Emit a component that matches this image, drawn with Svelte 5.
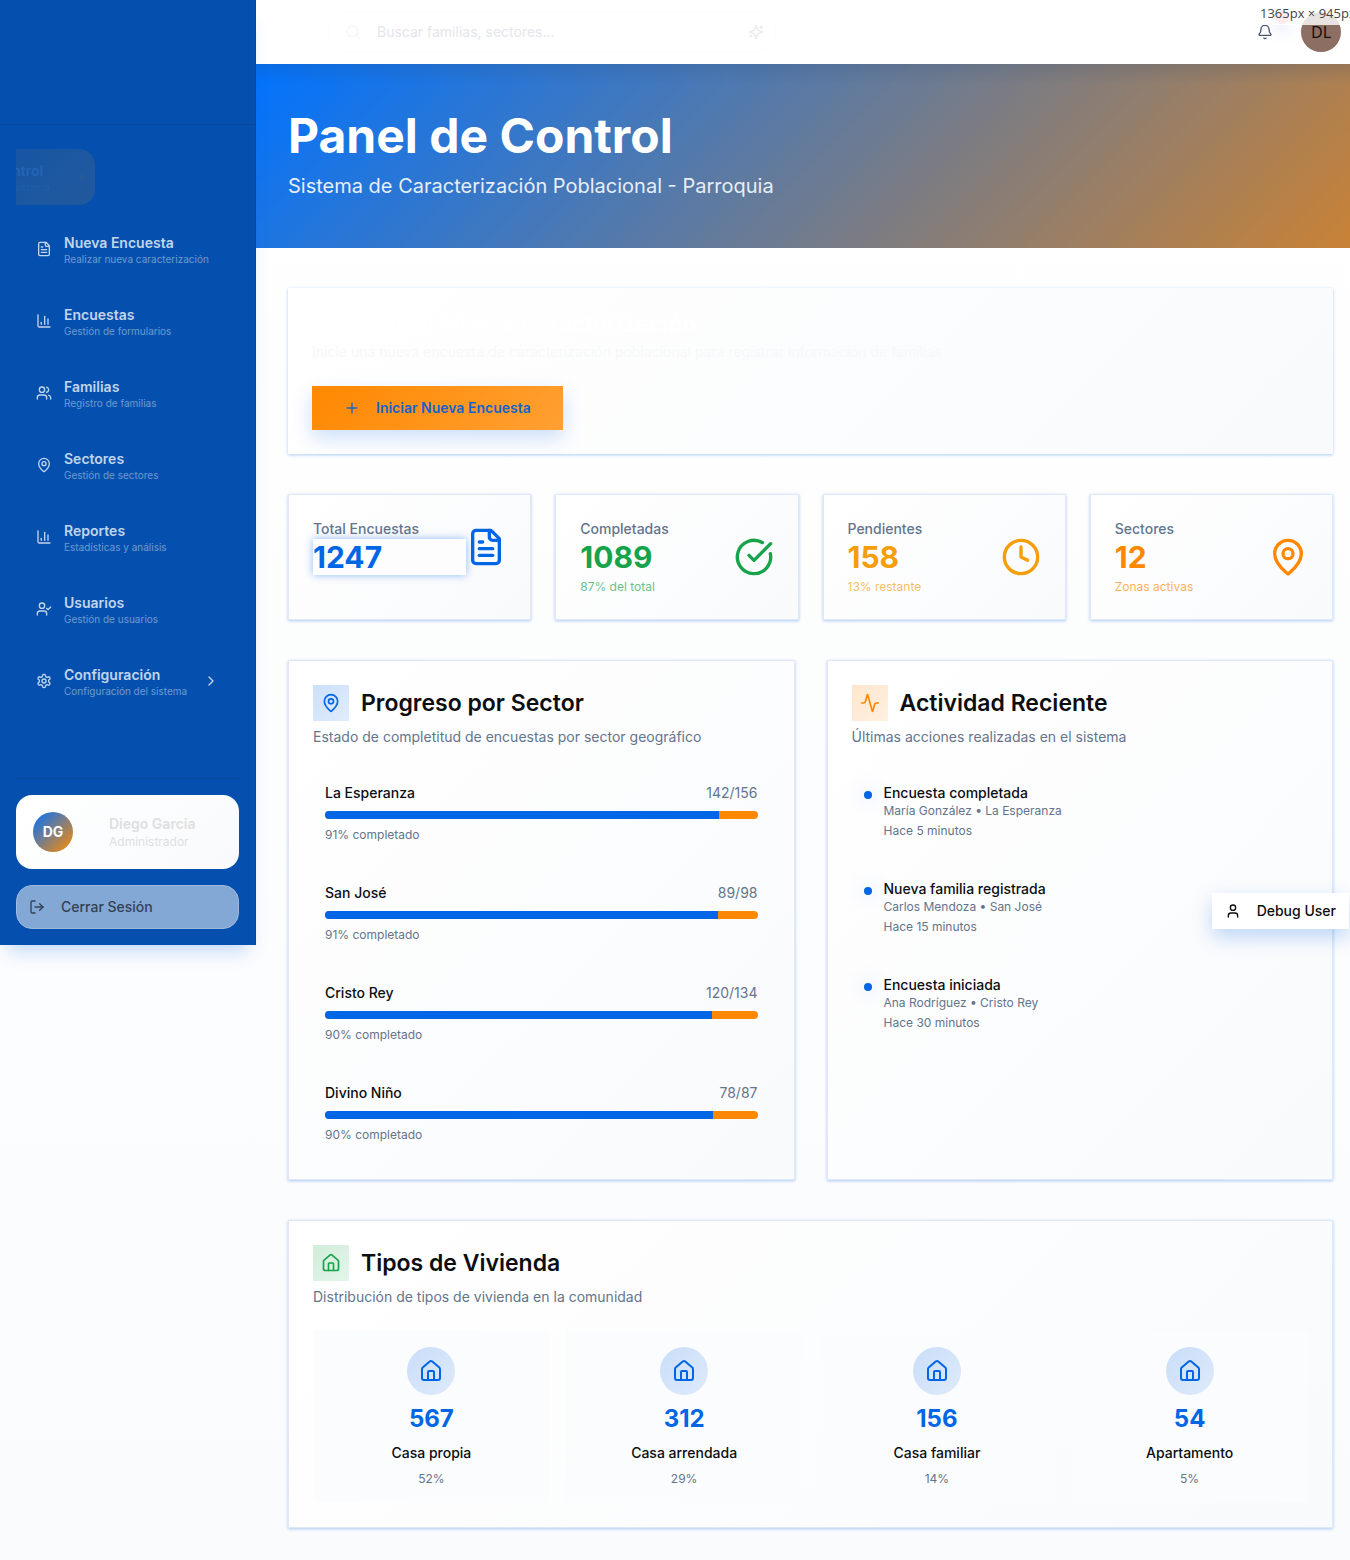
<script>
  const navItems = [
    { title: 'Nueva Encuesta', sub: 'Realizar nueva caracterización', icon: 'file' },
    { title: 'Encuestas', sub: 'Gestión de formularios', icon: 'chart' },
    { title: 'Familias', sub: 'Registro de familias', icon: 'users' },
    { title: 'Sectores', sub: 'Gestión de sectores', icon: 'pin' },
    { title: 'Reportes', sub: 'Estadísticas y análisis', icon: 'chart' },
    { title: 'Usuarios', sub: 'Gestión de usuarios', icon: 'usercheck' },
    { title: 'Configuración', sub: 'Configuración del sistema', icon: 'gear', more: true }
  ];
  const stats = [
    { label: 'Total Encuestas', value: '1247', sub: '', icon: 'file', tone: 'blue' },
    { label: 'Completadas', value: '1089', sub: '87% del total', icon: 'check', tone: 'green' },
    { label: 'Pendientes', value: '158', sub: '13% restante', icon: 'clock', tone: 'amber' },
    { label: 'Sectores', value: '12', sub: 'Zonas activas', icon: 'pin', tone: 'orange' }
  ];
  const sectors = [
    { name: 'La Esperanza', done: 142, total: 156 },
    { name: 'San José', done: 89, total: 98 },
    { name: 'Cristo Rey', done: 120, total: 134 },
    { name: 'Divino Niño', done: 78, total: 87 }
  ];
  const activity = [
    { title: 'Encuesta completada', who: 'María González • La Esperanza', time: 'Hace 5 minutos' },
    { title: 'Nueva familia registrada', who: 'Carlos Mendoza • San José', time: 'Hace 15 minutos' },
    { title: 'Encuesta iniciada', who: 'Ana Rodríguez • Cristo Rey', time: 'Hace 30 minutos' }
  ];
  const housing = [
    { count: 567, name: 'Casa propia', pct: '52%' },
    { count: 312, name: 'Casa arrendada', pct: '29%' },
    { count: 156, name: 'Casa familiar', pct: '14%' },
    { count: 54, name: 'Apartamento', pct: '5%' }
  ];
  const icons = {
    file: ['M15 2H6a2 2 0 0 0-2 2v16a2 2 0 0 0 2 2h12a2 2 0 0 0 2-2V7Z', 'M14 2v4a2 2 0 0 0 2 2h4', 'M10 9H8', 'M16 13H8', 'M16 17H8'],
    chart: ['M3 3v16a2 2 0 0 0 2 2h16', 'M18 17V9', 'M13 17V5', 'M8 17v-3'],
    users: ['M16 21v-2a4 4 0 0 0-4-4H6a4 4 0 0 0-4 4v2', 'M5 7a4 4 0 1 0 8 0a4 4 0 1 0-8 0', 'M22 21v-2a4 4 0 0 0-3-3.87', 'M16 3.13a4 4 0 0 1 0 7.75'],
    usercheck: ['m16 11 2 2 4-4', 'M16 21v-2a4 4 0 0 0-4-4H6a4 4 0 0 0-4 4v2', 'M5 7a4 4 0 1 0 8 0a4 4 0 1 0-8 0'],
    user: ['M19 21v-2a4 4 0 0 0-4-4H9a4 4 0 0 0-4 4v2', 'M8 7a4 4 0 1 0 8 0a4 4 0 1 0-8 0'],
    pin: ['M20 10c0 4.993-5.539 10.193-7.399 11.799a1 1 0 0 1-1.202 0C9.539 20.193 4 14.993 4 10a8 8 0 0 1 16 0', 'M9 10a3 3 0 1 0 6 0a3 3 0 1 0-6 0'],
    gear: ['M12.22 2h-.44a2 2 0 0 0-2 2v.18a2 2 0 0 1-1 1.73l-.43.25a2 2 0 0 1-2 0l-.15-.08a2 2 0 0 0-2.73.73l-.22.38a2 2 0 0 0 .73 2.73l.15.1a2 2 0 0 1 1 1.72v.51a2 2 0 0 1-1 1.74l-.15.09a2 2 0 0 0-.73 2.73l.22.38a2 2 0 0 0 2.73.73l.15-.08a2 2 0 0 1 2 0l.43.25a2 2 0 0 1 1 1.73V20a2 2 0 0 0 2 2h.44a2 2 0 0 0 2-2v-.18a2 2 0 0 1 1-1.73l.43-.25a2 2 0 0 1 2 0l.15.08a2 2 0 0 0 2.73-.73l.22-.39a2 2 0 0 0-.73-2.73l-.15-.08a2 2 0 0 1-1-1.74v-.5a2 2 0 0 1 1-1.74l.15-.09a2 2 0 0 0 .73-2.73l-.22-.38a2 2 0 0 0-2.73-.73l-.15.08a2 2 0 0 1-2 0l-.43-.25a2 2 0 0 1-1-1.73V4a2 2 0 0 0-2-2z', 'M9 12a3 3 0 1 0 6 0a3 3 0 1 0-6 0'],
    chevron: ['m9 18 6-6-6-6'],
    logout: ['m16 17 5-5-5-5', 'M21 12H9', 'M9 21H5a2 2 0 0 1-2-2V5a2 2 0 0 1 2-2h4'],
    search: ['M3 11a8 8 0 1 0 16 0a8 8 0 1 0-16 0', 'm21 21-4.3-4.3'],
    sparkles: ['M9.937 15.5A2 2 0 0 0 8.5 14.063l-6.135-1.582a.5.5 0 0 1 0-.962L8.5 9.936A2 2 0 0 0 9.937 8.5l1.582-6.135a.5.5 0 0 1 .963 0L14.063 8.5A2 2 0 0 0 15.5 9.937l6.135 1.581a.5.5 0 0 1 0 .964L15.5 14.063a2 2 0 0 0-1.437 1.437l-1.582 6.135a.5.5 0 0 1-.963 0z', 'M20 3v4', 'M22 5h-4', 'M4 17v2', 'M5 18H3'],
    bell: ['M10.268 21a2 2 0 0 0 3.464 0', 'M3.262 15.326A1 1 0 0 0 4 17h16a1 1 0 0 0 .74-1.673C19.41 13.956 18 12.499 18 8A6 6 0 0 0 6 8c0 4.499-1.411 5.956-2.738 7.326'],
    plus: ['M5 12h14', 'M12 5v14'],
    check: ['M21.801 10A10 10 0 1 1 17 3.335', 'm9 11 3 3L22 4'],
    clock: ['M2 12a10 10 0 1 0 20 0a10 10 0 1 0-20 0', 'M12 6v6l4 2'],
    activity: ['M22 12h-2.48a2 2 0 0 0-1.93 1.46l-2.35 8.36a.25.25 0 0 1-.48 0L9.24 2.18a.25.25 0 0 0-.48 0l-2.35 8.36A2 2 0 0 1 4.49 12H2'],
    house: ['M15 21v-8a1 1 0 0 0-1-1h-4a1 1 0 0 0-1 1v8', 'M3 10a2 2 0 0 1 .709-1.528l7-5.999a2 2 0 0 1 2.582 0l7 5.999A2 2 0 0 1 21 10v9a2 2 0 0 1-2 2H5a2 2 0 0 1-2-2z']
  };
</script>

{#snippet icon(name, size)}
  <svg class="icon" width={size} height={size} viewBox="0 0 24 24" aria-hidden="true">
    {#each icons[name] as d}<path {d} />{/each}
  </svg>
{/snippet}

{#snippet panelHead(name, tone, title, sub)}
  <header class="panel-head">
    <div class="panel-title">
      <span class="chip {tone}">{@render icon(name, 20)}</span>
      <h2>{title}</h2>
    </div>
    <p>{sub}</p>
  </header>
{/snippet}

<div class="app">
  <aside class="sidebar">
    <div class="brand"></div>
    <nav>
      <div class="slide">
        <a href="#panel" class="entering">
          <span class="nav-text"><b>Panel de Control</b><small>Vista general del sistema</small></span>
          <i></i>
        </a>
      </div>
      {#each navItems as item}
        <a href="#seccion" class="nav-item">
          {@render icon(item.icon, 16)}
          <span class="nav-text"><b>{item.title}</b><small>{item.sub}</small></span>
          {#if item.more}{@render icon('chevron', 16)}{/if}
        </a>
      {/each}
    </nav>
    <div class="account">
      <div class="user-card">
        <span class="initials">DG</span>
        <span class="user-text"><b>Diego Garcia</b><small>Administrador</small></span>
      </div>
      <button class="logout">{@render icon('logout', 16)}Cerrar Sesión</button>
    </div>
  </aside>

  <div class="page">
    <header class="topbar">
      <label class="search">
        {@render icon('search', 16)}
        <input type="search" placeholder="Buscar familias, sectores..." aria-label="Buscar" />
        {@render icon('sparkles', 16)}
      </label>
      <div class="tools">
        <button class="bell" aria-label="Notificaciones">{@render icon('bell', 16)}<i></i></button>
        <button class="avatar">DL</button>
      </div>
    </header>

    <section class="banner">
      <h1>Panel de Control</h1>
      <p>Sistema de Caracterización Poblacional - Parroquia</p>
    </section>

    <main>
      <section class="cta">
        <h2>{@render icon('file', 24)}Realizar Nueva Caracterización</h2>
        <p>Inicie una nueva encuesta de caracterización poblacional para registrar información de familias</p>
        <button>{@render icon('plus', 16)}Iniciar Nueva Encuesta</button>
      </section>

      <section class="stats">
        {#each stats as s, i}
          <article class="card stat {s.tone}">
            <div class="stat-row">
              <div class="stat-text">
                <span class="label">{s.label}</span>
                <strong class:glow={i === 0}>{s.value}</strong>
                {#if s.sub}<small>{s.sub}</small>{/if}
              </div>
              {@render icon(s.icon, 40)}
            </div>
          </article>
        {/each}
      </section>

      <section class="panels">
        <article class="card">
          {@render panelHead('pin', 'blue', 'Progreso por Sector', 'Estado de completitud de encuestas por sector geográfico')}
          <div class="list">
            {#each sectors as s}
              <div class="sector">
                <div class="sector-top"><span>{s.name}</span><em>{s.done}/{s.total}</em></div>
                <div class="bar"><div style:width="{(s.done / s.total) * 100}%"></div></div>
                <small>{Math.round((s.done / s.total) * 100)}% completado</small>
              </div>
            {/each}
          </div>
        </article>
        <article class="card">
          {@render panelHead('activity', 'orange', 'Actividad Reciente', 'Últimas acciones realizadas en el sistema')}
          <div class="list">
            {#each activity as a}
              <div class="event">
                <i></i>
                <div><span>{a.title}</span><small>{a.who}</small><small class="time">{a.time}</small></div>
              </div>
            {/each}
          </div>
        </article>
      </section>

      <section class="card">
        {@render panelHead('house', 'green', 'Tipos de Vivienda', 'Distribución de tipos de vivienda en la comunidad')}
        <div class="housing">
          {#each housing as h}
            <div class="home">
              <span class="round">{@render icon('house', 24)}</span>
              <strong>{h.count}</strong>
              <span>{h.name}</span>
              <small>{h.pct}</small>
            </div>
          {/each}
        </div>
      </section>
    </main>
  </div>

  <div class="viewport-size">1365px × 945px</div>
  <button class="debug">{@render icon('user', 16)}Debug User</button>
</div>

<style>
  :global(body) {
    margin: 0;
    font-family: Inter, 'Liberation Sans', sans-serif;
    color: #0c0e12;
  }
  .app, .app * { box-sizing: border-box; }
  .app {
    position: relative;
    display: grid;
    grid-template-columns: 256px minmax(0, 1fr);
    align-items: start;
    overflow: hidden;
    background: linear-gradient(180deg, #ffffff, #fafbfd);
    font-size: 14px;
    line-height: 20px;
  }
  h1, h2, p { margin: 0; }
  small { font-size: 12px; line-height: 16px; }
  button { font: inherit; border: 0; cursor: pointer; }
  a { color: inherit; text-decoration: none; }
  .icon {
    flex: none;
    fill: none;
    stroke: currentColor;
    stroke-width: 2;
    stroke-linecap: round;
    stroke-linejoin: round;
  }

  .sidebar {
    background: #0550ae;
    border-right: 1px solid #05479c;
    box-shadow: 0 14px 18px -8px rgba(0, 102, 230, 0.24);
    z-index: 2;
  }
  .brand { height: 125px; border-bottom: 1px solid #07489b; }
  nav { display: flex; flex-direction: column; gap: 16px; padding: 24px 16px 69px; }
  .slide { height: 56px; overflow: hidden; }
  .entering {
    display: flex;
    align-items: center;
    justify-content: flex-end;
    gap: 29px;
    width: 223px;
    height: 56px;
    margin-left: -144px;
    padding-right: 10px;
    border-radius: 16px;
    background: linear-gradient(135deg, #0b52ab, #22599d);
    color: #2265b6;
  }
  .entering .nav-text { flex: none; }
  .entering i { width: 6px; height: 6px; border-radius: 50%; background: #265a98; }
  .nav-item { display: flex; align-items: center; gap: 12px; height: 56px; padding: 0 20px; color: #c1d5ec; }
  .nav-text { display: flex; flex-direction: column; flex: 1; padding-top: 2px; line-height: 18px; }
  .nav-text b { font-weight: 600; }
  .nav-text small { font-size: 10px; line-height: 14px; opacity: 0.55; }
  .account { display: flex; flex-direction: column; gap: 16px; margin: 0 16px 16px; padding-top: 16px; border-top: 1px solid #07489b; }
  .user-card {
    display: flex;
    align-items: center;
    gap: 36px;
    padding: 17px;
    border-radius: 16px;
    background: linear-gradient(135deg, #ffffff, #f8fafc);
    color: #dddfe2;
  }
  .user-text { display: flex; flex-direction: column; }
  .user-text b { font-weight: 600; }
  .initials {
    display: grid;
    place-items: center;
    width: 40px;
    height: 40px;
    border-radius: 50%;
    background: linear-gradient(135deg, #0070ff, #ff8c00);
    color: #fff;
    font-weight: 700;
  }
  .logout {
    display: flex;
    align-items: center;
    gap: 16px;
    height: 44px;
    padding: 0 12px;
    border: 1px solid #9db9dd;
    border-radius: 16px;
    background: #83a8d6;
    color: #334155;
    font-weight: 500;
  }

  .page { min-width: 0; }
  .topbar {
    display: flex;
    align-items: center;
    justify-content: space-between;
    height: 64px;
    padding: 0 9px 0 72px;
    background: #fff;
    position: relative;
    box-shadow: 0 4px 20px rgba(70, 90, 120, 0.45);
  }
  .search {
    display: flex;
    align-items: center;
    gap: 16px;
    flex: 0 1 448px;
    height: 40px;
    padding: 0 11px 0 16px;
    border: 1px solid #fdfdfe;
    border-radius: 16px;
    color: #f4f5f7;
  }
  .search .icon:last-child { color: #e8eaed; }
  .search input {
    flex: 1;
    min-width: 0;
    padding: 0;
    border: 0;
    outline: 0;
    background: none;
    font: inherit;
  }
  .search input::placeholder { color: #e4e6ea; opacity: 1; }
  .tools { display: flex; align-items: center; gap: 16px; }
  .bell { position: relative; display: grid; place-items: center; width: 40px; height: 40px; padding: 0; background: none; color: #475569; }
  .bell i {
    position: absolute;
    top: -2px;
    right: -4px;
    width: 14px;
    height: 14px;
    border-radius: 50%;
    background: #f79c9c;
    box-shadow: 0 8px 16px rgba(0, 102, 230, 0.16);
  }
  .avatar {
    width: 40px;
    height: 40px;
    padding: 0;
    border-radius: 50%;
    background: #8d6e63;
    color: #111;
    font-family: 'Noto Sans', sans-serif;
    font-size: 16px;
  }

  .banner {
    padding: 48px 32px;
    background: linear-gradient(180deg, rgba(50, 70, 100, 0.16), transparent 20px), linear-gradient(135deg, #0073ff, #c98235);
    color: #fff;
    position: relative;
  }
  .banner h1 { font-size: 48px; line-height: 48px; font-weight: 700; }
  .banner p { margin-top: 12px; font-size: 20px; line-height: 28px; color: #e7eef8; }

  main { display: flex; flex-direction: column; gap: 40px; padding: 40px 17px 32px 32px; }
  .cta, .card {
    padding: 24px;
    background: linear-gradient(135deg, #ffffff, #f9fafc);
    box-shadow: 0 1px 3px rgba(0, 102, 230, 0.32);
  }
  .card { border: 1px solid #dfe8f5; }
  .cta h2 { display: flex; align-items: center; gap: 12px; font-size: 23px; line-height: 24px; font-weight: 600; color: #fff; }
  .cta p { margin-top: 6px; font-size: 14px; color: #f7f8f9; }
  .cta button {
    display: flex;
    align-items: center;
    gap: 16px;
    height: 44px;
    margin-top: 24px;
    padding: 0 32px;
    background: linear-gradient(135deg, #ff8800, #ffa033);
    box-shadow: 0 8px 20px rgba(0, 102, 230, 0.2);
    color: #1263cf;
    font-weight: 600;
  }

  .stats { display: grid; grid-template-columns: repeat(4, minmax(0, 1fr)); gap: 24px; }
  .stat-row { display: flex; align-items: center; }
  .stat-text { display: flex; flex-direction: column; flex: 1; }
  .label { color: #64748b; font-weight: 500; }
  .stat strong { font-size: 30px; line-height: 36px; font-weight: 700; }
  .stat small { margin-top: 4px; opacity: 0.65; }
  .glow { background: #fdfdfe; box-shadow: 0 0 8px rgba(0, 102, 230, 0.45); }
  .blue { color: #0066e6; }
  .green { color: #16a34a; }
  .amber { color: #f59e0b; }
  .orange { color: #ff8800; }

  .panels { display: grid; grid-template-columns: repeat(2, minmax(0, 1fr)); gap: 32px; }
  .panel-head { margin-bottom: 24px; }
  .panel-title { display: flex; align-items: center; gap: 12px; }
  .panel-title h2 { font-size: 23px; line-height: 24px; font-weight: 600; }
  .panel-head p { margin-top: 6px; color: #64748b; }
  .chip { display: grid; place-items: center; width: 36px; height: 36px; }
  .chip.blue { background: linear-gradient(135deg, #cce0fa, #e0ecfc); }
  .chip.orange { background: linear-gradient(135deg, #ffe7cc, #fff0e0); }
  .chip.green { background: linear-gradient(135deg, #d0eddb, #e4f5ea); }
  .list { display: flex; flex-direction: column; gap: 16px; }
  .sector { display: flex; flex-direction: column; gap: 8px; padding: 12px; }
  .sector-top { display: flex; justify-content: space-between; font-weight: 500; }
  .sector-top em { font-style: normal; font-weight: 400; color: #64748b; }
  .sector small, .event small, .home small { color: #64748b; }
  .bar { height: 8px; border-radius: 4px; overflow: hidden; background: #ff8800; }
  .bar div { height: 100%; background: #0066e6; }
  .event { display: flex; gap: 12px; padding: 12px; }
  .event i { flex: none; width: 8px; height: 8px; margin-top: 8px; border-radius: 50%; background: #0066e6; box-shadow: 0 0 20px rgba(0, 102, 230, 0.3); }
  .event div { display: flex; flex-direction: column; font-weight: 500; }
  .event small { font-weight: 400; }
  .event .time { margin-top: 4px; }

  .housing { display: grid; grid-template-columns: repeat(4, minmax(0, 1fr)); gap: 16px; }
  .home { display: flex; flex-direction: column; align-items: center; gap: 8px; padding: 16px; background: #fbfcfd; font-weight: 500; }
  .home strong { font-size: 24px; line-height: 32px; font-weight: 700; color: #0066e6; }
  .home small { font-weight: 400; }
  .round {
    display: grid;
    place-items: center;
    width: 48px;
    height: 48px;
    border-radius: 50%;
    background: linear-gradient(135deg, #c9def9, #deeafa);
    color: #0066e6;
  }

  .viewport-size {
    position: absolute;
    top: 0;
    right: 0;
    z-index: 4;
    width: 97px;
    height: 25px;
    padding: 3px 0 0 7px;
    overflow: hidden;
    white-space: nowrap;
    background: rgba(255, 255, 255, 0.8);
    color: #444;
    font-family: 'Open Sans', 'Noto Sans', sans-serif;
    font-size: 13px;
  }
  .debug {
    position: absolute;
    top: 893px;
    right: 1px;
    z-index: 3;
    display: flex;
    align-items: center;
    gap: 16px;
    height: 36px;
    padding: 0 13px;
    background: #fff;
    box-shadow: 0 8px 20px rgba(0, 102, 230, 0.25);
    color: #0c0e12;
    font-weight: 500;
  }
</style>
